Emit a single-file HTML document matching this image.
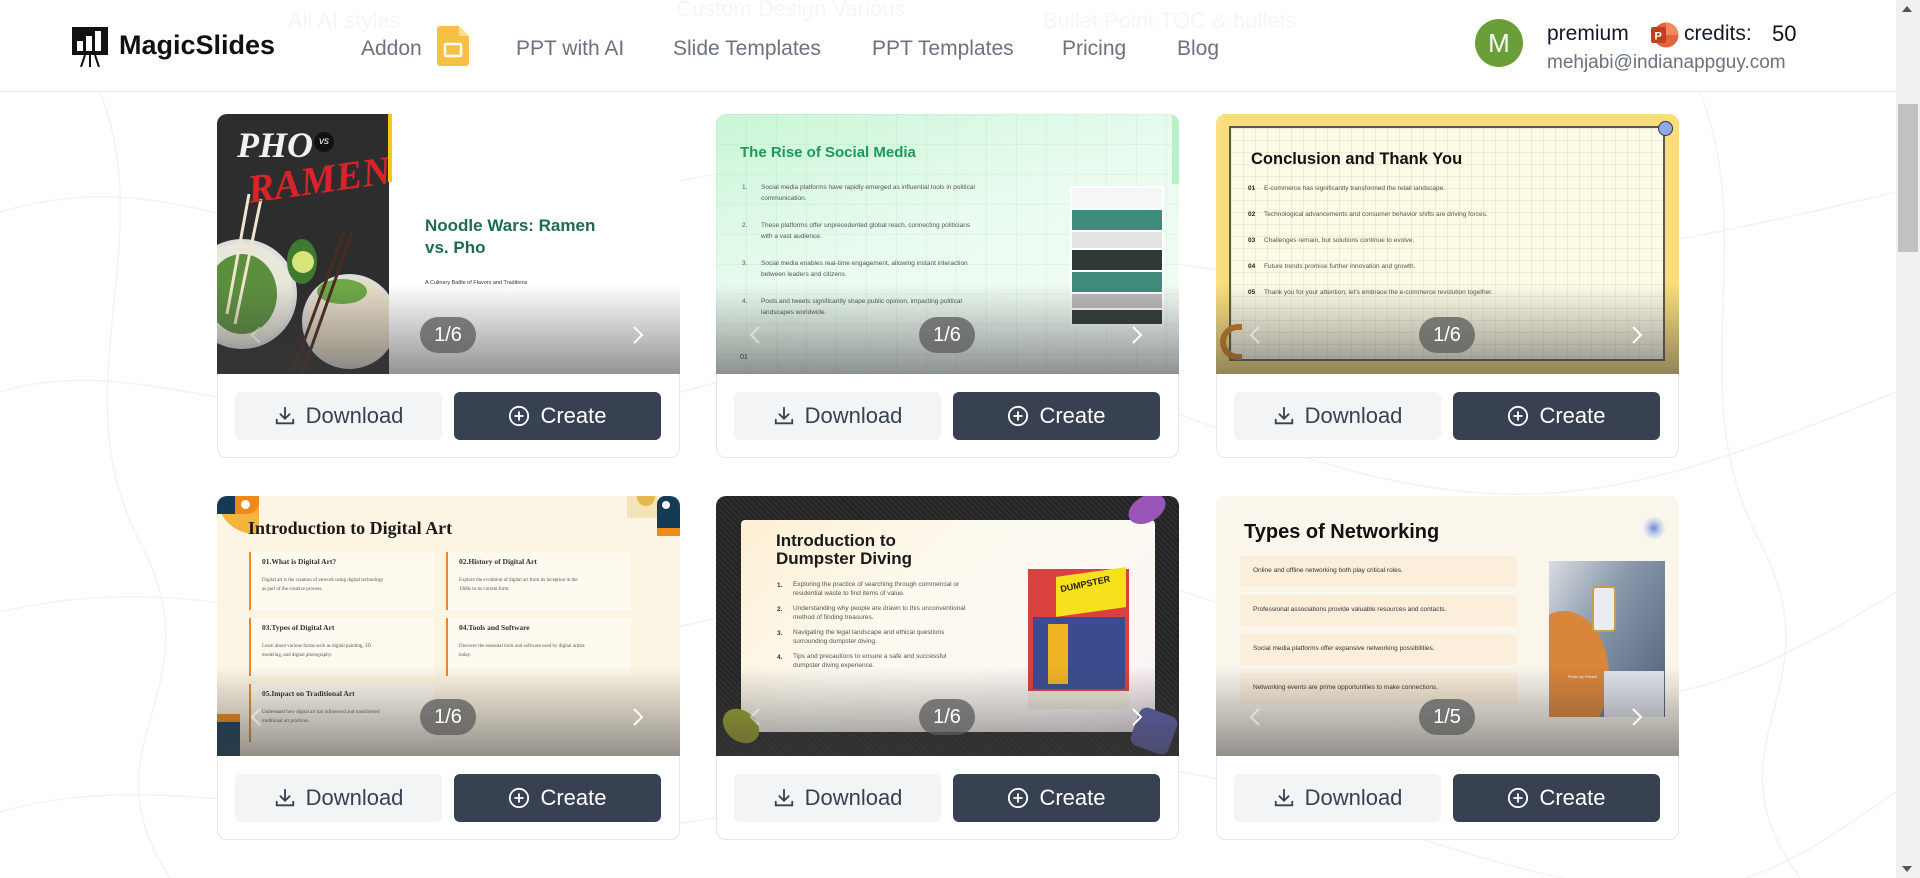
<!DOCTYPE html>
<html><head><meta charset="utf-8">
<style>
*{box-sizing:border-box;margin:0;padding:0}
html,body{width:1920px;height:878px;overflow:hidden;background:#fff;font-family:"Liberation Sans",sans-serif}
.abs{position:absolute}
.hdr{position:absolute;left:0;top:0;width:1896px;height:92px;background:#fff;border-bottom:1px solid #e5e7eb}
.nav{position:absolute;top:37px;font-size:21px;color:#6b7280;white-space:nowrap}
.ghost{position:absolute;color:#f6f6f7;font-size:22px;white-space:nowrap}
.card{position:absolute;width:463px;height:344px;border:1px solid #e5e7eb;border-radius:10px;background:#fff}
.img{position:absolute;left:-1px;top:-1px;width:463px;height:260px;overflow:hidden;border-radius:10px 10px 0 0}
.ov{position:absolute;left:0;top:170px;width:463px;height:90px;background:linear-gradient(to bottom,rgba(60,60,60,0),rgba(60,60,60,.55))}
.pill{position:absolute;left:203px;top:203px;width:56px;height:36px;border-radius:18px;background:rgba(90,90,90,.75);color:#fff;font-size:20px;text-align:center;line-height:36px}
.ar{position:absolute;top:211px}
.btn{position:absolute;top:277px;width:207px;height:48px;border-radius:6px;font-size:22px;display:flex;align-items:center;justify-content:center;gap:10px}
.dl{left:17px;background:#f3f4f6;color:#374151}
.cr{left:236px;background:#374151;color:#fff}
.t{position:absolute;white-space:nowrap}
.sm{font-size:6.5px;color:#555;line-height:11px}
</style></head><body>

<svg class="abs" style="left:0;top:92px" width="1896" height="786">
<g fill="none" stroke="#f3f3f3" stroke-width="1.5">
<path d="M0 120 C200 60 300 200 500 140 S800 40 1000 120 1400 220 1896 100"/>
<path d="M0 300 C150 250 350 380 600 320 S900 220 1200 330 1600 420 1896 300"/>
<path d="M0 520 C250 460 400 600 700 530 S1000 430 1300 540 1700 620 1896 500"/>
<path d="M0 720 C200 660 450 780 750 720 S1100 640 1400 740 1750 800 1896 700"/>
<path d="M1700 0 C1760 150 1680 300 1760 450 S1700 650 1800 786"/>
<path d="M100 0 C160 150 60 300 140 450 S80 650 170 786"/>
</g></svg>

<div class="hdr">
  <div class="ghost" style="left:288px;top:8px">All AI styles</div>
  <div class="ghost" style="left:676px;top:-4px">Custom Design Various</div>
  <div class="ghost" style="left:1043px;top:8px">Bullet Point TOC &amp; bullets</div>
  <svg class="abs" style="left:72px;top:27px" width="36" height="40" viewBox="0 0 36 40">
    <rect x="0" y="0" width="36" height="28" fill="#111"/>
    <rect x="5" y="14" width="6" height="10" fill="#fff"/>
    <rect x="14" y="9" width="6" height="15" fill="#fff"/>
    <rect x="23" y="4" width="6" height="20" fill="#fff"/>
    <path d="M18 28 L18 40 M13 28 L9 40 M23 28 L27 40" stroke="#111" stroke-width="2"/>
  </svg>
  <div class="t" style="left:119px;top:30px;font-size:27px;font-weight:bold;color:#111">MagicSlides</div>
  <div class="nav" style="left:361px">Addon</div>
  <svg class="abs" style="left:437px;top:26px" width="32" height="40" viewBox="0 0 32 40">
    <path d="M3 0 H22 L32 10 V37 a3 3 0 0 1 -3 3 H3 a3 3 0 0 1 -3 -3 V3 a3 3 0 0 1 3 -3z" fill="#f6c143"/>
    <path d="M22 0 V10 H32z" fill="#f9dc8e"/>
    <rect x="8" y="18" width="16" height="12" rx="1" fill="none" stroke="#fff" stroke-width="2.5"/>
  </svg>
  <div class="nav" style="left:516px">PPT with AI</div>
  <div class="nav" style="left:673px">Slide Templates</div>
  <div class="nav" style="left:872px">PPT Templates</div>
  <div class="nav" style="left:1062px">Pricing</div>
  <div class="nav" style="left:1177px">Blog</div>
  <div class="abs" style="left:1475px;top:19px;width:48px;height:48px;border-radius:50%;background:#6a9e39;color:#fff;font-size:26px;text-align:center;line-height:48px">M</div>
  <div class="t" style="left:1547px;top:22px;font-size:21px;color:#111827">premium</div>
  <svg class="abs" style="left:1650px;top:22px" width="29" height="26" viewBox="0 0 29 26">
    <circle cx="16" cy="13" r="12.5" fill="#e3633d"/>
    <path d="M16 0.5 A12.5 12.5 0 0 1 28.5 13 H16z" fill="#f08a5d"/>
    <rect x="1" y="5" width="15" height="16" rx="2" fill="#c43e1c"/>
    <text x="4.5" y="17.5" font-size="11" font-weight="bold" fill="#fff" font-family="Liberation Sans">P</text>
  </svg>
  <div class="t" style="left:1684px;top:22px;font-size:21px;color:#111827">credits:</div>
  <div class="t" style="left:1772px;top:21px;font-size:22px;color:#111">50</div>
  <div class="t" style="left:1547px;top:52px;font-size:19px;color:#6b7280">mehjabi@indianappguy.com</div>
</div>

<div class="abs" style="left:1896px;top:0;width:24px;height:878px;background:#f1f1f1"></div>
<div class="abs" style="left:1898px;top:104px;width:20px;height:148px;background:#c1c1c1"></div>
<div class="abs" style="left:1902px;top:6px;width:0;height:0;border-left:5px solid transparent;border-right:5px solid transparent;border-bottom:6px solid #555"></div>
<div class="abs" style="left:1902px;top:866px;width:0;height:0;border-left:5px solid transparent;border-right:5px solid transparent;border-top:6px solid #555"></div>

<!-- CARD 1 -->
<div class="card" style="left:217px;top:114px">
 <div class="img" style="background:#fff">
  <div class="abs" style="left:0;top:0;width:172px;height:260px;background:#2d2d2e;overflow:hidden">
   <div class="abs" style="left:-30px;top:125px;width:110px;height:110px;border-radius:50%;background:#e9e6dc;border:4px solid #ddd"></div>
   <div class="abs" style="left:-10px;top:140px;width:70px;height:80px;border-radius:50%;background:#5b8f3e"></div>
   <div class="abs" style="left:85px;top:160px;width:95px;height:95px;border-radius:50%;background:#e8dcc8;border:4px solid #ddd"></div>
   <div class="abs" style="left:100px;top:165px;width:50px;height:25px;border-radius:50%;background:#6ea846"></div>
   <div class="abs" style="left:70px;top:125px;width:30px;height:45px;border-radius:50%;background:#3f7a2e"></div>
   <div class="abs" style="left:75px;top:137px;width:22px;height:22px;border-radius:50%;background:#d8e47a"></div>
   <svg class="abs" style="left:0;top:0" width="172" height="260"><path d="M32 80 L10 200 M44 85 L18 210" stroke="#eee6cf" stroke-width="3"/><path d="M135 118 L85 260 M128 115 L75 260" stroke="#4a2b20" stroke-width="3"/></svg>
   <div class="t" style="left:20px;top:10px;font-size:36px;font-style:italic;font-weight:bold;color:#f2f2f2;font-family:'Liberation Serif',serif">PHO</div>
   <div class="abs" style="left:97px;top:18px;width:20px;height:20px;border-radius:50%;background:#111;color:#fff;font-size:10px;text-align:center;line-height:20px;font-style:italic">vs</div>
   <div class="t" style="left:30px;top:42px;font-size:40px;font-style:italic;font-weight:bold;color:#d9232b;font-family:'Liberation Serif',serif;transform:rotate(-8deg)">RAMEN</div>
  </div>
  <div class="abs" style="left:171px;top:0;width:4px;height:68px;background:#f5c915"></div>
  <div class="t" style="left:208px;top:101px;font-size:17px;font-weight:bold;color:#1e6b4e;line-height:22px">Noodle Wars: Ramen<br>vs. Pho</div>
  <div class="t" style="left:208px;top:166px;font-size:5.5px;color:#333">A Culinary Battle of Flavors and Traditions</div>
  <div class="ov"></div>
  <div class="pill">1/6</div>
  <svg class="ar" style="left:33px" width="12" height="20"><path d="M10 2 L2 10 L10 18" fill="none" stroke="rgba(255,255,255,.35)" stroke-width="2"/></svg>
  <svg class="ar" style="left:415px" width="12" height="20"><path d="M2 2 L10 10 L2 18" fill="none" stroke="#fff" stroke-width="2"/></svg>
 </div>
 <div class="btn dl"><svg width="22" height="22" viewBox="0 0 24 24" fill="none" stroke="#374151" stroke-width="2" stroke-linecap="round"><path d="M12 3v12M7 10l5 5 5-5M3 16v4h18v-4"/></svg>Download</div>
 <div class="btn cr"><svg width="22" height="22" viewBox="0 0 24 24" fill="none" stroke="#fff" stroke-width="2"><circle cx="12" cy="12" r="10"/><path d="M12 7v10M7 12h10"/></svg>Create</div>
</div>

<!-- CARD 2 -->
<div class="card" style="left:716px;top:114px">
 <div class="img" style="background:linear-gradient(160deg,#c9f6d7 0%,#e9fbef 45%,#f6fdf8 100%)">
  <div class="abs" style="left:0;top:0;width:463px;height:260px;background-image:linear-gradient(rgba(150,200,170,.15) 1px,transparent 1px),linear-gradient(90deg,rgba(150,200,170,.15) 1px,transparent 1px);background-size:30px 30px"></div>
  <div class="abs" style="left:456px;top:0;width:7px;height:70px;background:#b8f0c8"></div>
  <div class="t" style="left:24px;top:30px;font-size:15px;font-weight:bold;color:#1b9a57">The Rise of Social Media</div>
  <div class="t sm" style="left:26px;top:68px">1.</div><div class="t sm" style="left:45px;top:68px">Social media platforms have rapidly emerged as influential tools in political<br>communication.</div>
  <div class="t sm" style="left:26px;top:106px">2.</div><div class="t sm" style="left:45px;top:106px">These platforms offer unprecedented global reach, connecting politicians<br>with a vast audience.</div>
  <div class="t sm" style="left:26px;top:144px">3.</div><div class="t sm" style="left:45px;top:144px">Social media enables real-time engagement, allowing instant interaction<br>between leaders and citizens.</div>
  <div class="t sm" style="left:26px;top:182px">4.</div><div class="t sm" style="left:45px;top:182px">Posts and tweets significantly shape public opinion, impacting political<br>landscapes worldwide.</div>
  <div class="abs" style="left:354px;top:72px;width:94px;height:140px;background:#fff">
   <div class="abs" style="left:2px;top:2px;width:90px;height:20px;background:#f4f7f6"></div>
   <div class="abs" style="left:2px;top:24px;width:90px;height:20px;background:#3f8c7c"></div>
   <div class="abs" style="left:2px;top:46px;width:90px;height:16px;background:#e3e3e3"></div>
   <div class="abs" style="left:2px;top:64px;width:90px;height:20px;background:#2d3a38"></div>
   <div class="abs" style="left:2px;top:86px;width:90px;height:20px;background:#3f8c7c"></div>
   <div class="abs" style="left:2px;top:108px;width:90px;height:14px;background:#bbb"></div>
   <div class="abs" style="left:2px;top:124px;width:90px;height:14px;background:#2d3a38"></div>
  </div>
  <div class="t" style="left:24px;top:240px;font-size:7px;color:#333">01</div>
  <div class="ov"></div>
  <div class="pill">1/6</div>
  <svg class="ar" style="left:33px" width="12" height="20"><path d="M10 2 L2 10 L10 18" fill="none" stroke="rgba(255,255,255,.5)" stroke-width="2"/></svg>
  <svg class="ar" style="left:415px" width="12" height="20"><path d="M2 2 L10 10 L2 18" fill="none" stroke="#fff" stroke-width="2"/></svg>
 </div>
 <div class="btn dl"><svg width="22" height="22" viewBox="0 0 24 24" fill="none" stroke="#374151" stroke-width="2" stroke-linecap="round"><path d="M12 3v12M7 10l5 5 5-5M3 16v4h18v-4"/></svg>Download</div>
 <div class="btn cr"><svg width="22" height="22" viewBox="0 0 24 24" fill="none" stroke="#fff" stroke-width="2"><circle cx="12" cy="12" r="10"/><path d="M12 7v10M7 12h10"/></svg>Create</div>
</div>

<!-- CARD 3 -->
<div class="card" style="left:1216px;top:114px">
 <div class="img" style="background:#fbe07f">
  <div class="abs" style="left:6px;top:0;width:457px;height:260px;background:#f9dd7c"></div>
  <div class="abs" style="left:13px;top:12px;width:436px;height:235px;background:#fdfbe6;border:2px solid #5b5a48;background-image:linear-gradient(rgba(180,180,150,.2) 1px,transparent 1px),linear-gradient(90deg,rgba(180,180,150,.2) 1px,transparent 1px);background-size:12px 12px"></div>
  <div class="abs" style="left:442px;top:7px;width:15px;height:15px;border-radius:50%;background:#8fa9e6;border:1.5px solid #334"></div>
  <div class="t" style="left:35px;top:36px;font-size:16.5px;font-weight:bold;color:#111">Conclusion and Thank You</div>
  <div class="t sm" style="left:32px;top:69px;color:#222;font-weight:bold">01</div><div class="t sm" style="left:48px;top:69px">E-commerce has significantly transformed the retail landscape.</div>
  <div class="t sm" style="left:32px;top:95px;color:#222;font-weight:bold">02</div><div class="t sm" style="left:48px;top:95px">Technological advancements and consumer behavior shifts are driving forces.</div>
  <div class="t sm" style="left:32px;top:121px;color:#222;font-weight:bold">03</div><div class="t sm" style="left:48px;top:121px">Challenges remain, but solutions continue to evolve.</div>
  <div class="t sm" style="left:32px;top:147px;color:#222;font-weight:bold">04</div><div class="t sm" style="left:48px;top:147px">Future trends promise further innovation and growth.</div>
  <div class="t sm" style="left:32px;top:173px;color:#222;font-weight:bold">05</div><div class="t sm" style="left:48px;top:173px">Thank you for your attention; let's embrace the e-commerce revolution together.</div>
  <div class="abs" style="left:4px;top:210px;width:22px;height:36px;border:6px solid #c97a22;border-right:none;border-radius:18px 0 0 18px"></div>
  <div class="ov"></div>
  <div class="pill">1/6</div>
  <svg class="ar" style="left:33px" width="12" height="20"><path d="M10 2 L2 10 L10 18" fill="none" stroke="rgba(255,255,255,.5)" stroke-width="2"/></svg>
  <svg class="ar" style="left:415px" width="12" height="20"><path d="M2 2 L10 10 L2 18" fill="none" stroke="#fff" stroke-width="2"/></svg>
 </div>
 <div class="btn dl"><svg width="22" height="22" viewBox="0 0 24 24" fill="none" stroke="#374151" stroke-width="2" stroke-linecap="round"><path d="M12 3v12M7 10l5 5 5-5M3 16v4h18v-4"/></svg>Download</div>
 <div class="btn cr"><svg width="22" height="22" viewBox="0 0 24 24" fill="none" stroke="#fff" stroke-width="2"><circle cx="12" cy="12" r="10"/><path d="M12 7v10M7 12h10"/></svg>Create</div>
</div>

<!-- CARD 4 -->
<div class="card" style="left:217px;top:496px">
 <div class="img" style="background:#fdf5e3">
  <div class="abs" style="left:0;top:0;width:42px;height:38px;background:#f4b43d;border-radius:0 0 0 38px"></div>
  <div class="abs" style="left:0;top:0;width:22px;height:18px;background:#153a55"></div>
  <div class="abs" style="left:18px;top:0;width:24px;height:18px;background:#ee8a1a;border-radius:0 0 12px 0"></div>
  <div class="abs" style="left:24px;top:4px;width:9px;height:9px;border-radius:50%;background:#fff"></div>
  <div class="abs" style="left:410px;top:0;width:30px;height:22px;background:#f2e3b9"></div>
  <div class="abs" style="left:420px;top:0;width:18px;height:10px;border-radius:0 0 9px 9px;background:#e6b850"></div>
  <div class="abs" style="left:440px;top:0;width:23px;height:40px;background:#153a55;border-bottom:8px solid #ee8a1a;border-radius:8px 0 0 0"></div>
  <div class="abs" style="left:445px;top:5px;width:8px;height:8px;border-radius:50%;background:#fff"></div>
  <div class="abs" style="left:0;top:218px;width:23px;height:42px;background:#153a55;border-top:8px solid #ee8a1a"></div>
  <div class="t" style="left:31px;top:22px;font-size:18px;font-weight:bold;color:#1a1a1a;font-family:'Liberation Serif',serif">Introduction to Digital Art</div>
  <div class="abs" style="left:32px;top:56px;width:185px;height:58px;background:#fffaef;border-left:2px solid #e9882a"></div>
  <div class="abs" style="left:229px;top:56px;width:185px;height:58px;background:#fffaef;border-left:2px solid #e9882a"></div>
  <div class="abs" style="left:32px;top:122px;width:185px;height:58px;background:#fffaef;border-left:2px solid #e9882a"></div>
  <div class="abs" style="left:229px;top:122px;width:185px;height:58px;background:#fffaef;border-left:2px solid #e9882a"></div>
  <div class="abs" style="left:32px;top:188px;width:185px;height:58px;background:#fffaef;border-left:2px solid #e9882a"></div>
  <div class="t" style="left:45px;top:61px;font-size:7.5px;font-weight:bold;font-family:'Liberation Serif',serif;color:#333">01.What is Digital Art?</div>
  <div class="t" style="left:242px;top:61px;font-size:7.5px;font-weight:bold;font-family:'Liberation Serif',serif;color:#333">02.History of Digital Art</div>
  <div class="t" style="left:45px;top:127px;font-size:7.5px;font-weight:bold;font-family:'Liberation Serif',serif;color:#333">03.Types of Digital Art</div>
  <div class="t" style="left:242px;top:127px;font-size:7.5px;font-weight:bold;font-family:'Liberation Serif',serif;color:#333">04.Tools and Software</div>
  <div class="t" style="left:45px;top:193px;font-size:7.5px;font-weight:bold;font-family:'Liberation Serif',serif;color:#333">05.Impact on Traditional Art</div>
  <div class="t" style="left:45px;top:80px;font-size:5px;line-height:9px;color:#555;font-family:'Liberation Serif',serif">Digital art is the creation of artwork using digital technology<br>as part of the creative process.</div>
  <div class="t" style="left:242px;top:80px;font-size:5px;line-height:9px;color:#555;font-family:'Liberation Serif',serif">Explore the evolution of digital art from its inception in the<br>1960s to its current form.</div>
  <div class="t" style="left:45px;top:146px;font-size:5px;line-height:9px;color:#555;font-family:'Liberation Serif',serif">Learn about various forms such as digital painting, 3D<br>modeling, and digital photography.</div>
  <div class="t" style="left:242px;top:146px;font-size:5px;line-height:9px;color:#555;font-family:'Liberation Serif',serif">Discover the essential tools and software used by digital artists<br>today.</div>
  <div class="t" style="left:45px;top:212px;font-size:5px;line-height:9px;color:#555;font-family:'Liberation Serif',serif">Understand how digital art has influenced and transformed<br>traditional art practices.</div>
  <div class="ov"></div>
  <div class="pill">1/6</div>
  <svg class="ar" style="left:33px" width="12" height="20"><path d="M10 2 L2 10 L10 18" fill="none" stroke="rgba(255,255,255,.5)" stroke-width="2"/></svg>
  <svg class="ar" style="left:415px" width="12" height="20"><path d="M2 2 L10 10 L2 18" fill="none" stroke="#fff" stroke-width="2"/></svg>
 </div>
 <div class="btn dl"><svg width="22" height="22" viewBox="0 0 24 24" fill="none" stroke="#374151" stroke-width="2" stroke-linecap="round"><path d="M12 3v12M7 10l5 5 5-5M3 16v4h18v-4"/></svg>Download</div>
 <div class="btn cr"><svg width="22" height="22" viewBox="0 0 24 24" fill="none" stroke="#fff" stroke-width="2"><circle cx="12" cy="12" r="10"/><path d="M12 7v10M7 12h10"/></svg>Create</div>
</div>

<!-- CARD 5 -->
<div class="card" style="left:716px;top:496px">
 <div class="img" style="background:#2a2a2a;background-image:repeating-linear-gradient(45deg,#2e2e2e 0 2px,#232323 2px 4px)">
  <div class="abs" style="left:25px;top:24px;width:414px;height:212px;border-radius:4px;background:linear-gradient(135deg,#fdefd3 0%,#fdfaf0 40%,#fbf6f4 85%,#f5e6f0 100%)"></div>
  <div class="t" style="left:60px;top:36px;font-size:17px;font-weight:bold;color:#1a1a1a;line-height:18px">Introduction to<br>Dumpster Diving</div>
  <div class="t sm" style="left:61px;top:84px;font-weight:bold;color:#333">1.</div><div class="t sm" style="left:77px;top:84px;line-height:9px">Exploring the practice of searching through commercial or<br>residential waste to find items of value.</div>
  <div class="t sm" style="left:61px;top:108px;font-weight:bold;color:#333">2.</div><div class="t sm" style="left:77px;top:108px;line-height:9px">Understanding why people are drawn to this unconventional<br>method of finding treasures.</div>
  <div class="t sm" style="left:61px;top:132px;font-weight:bold;color:#333">3.</div><div class="t sm" style="left:77px;top:132px;line-height:9px">Navigating the legal landscape and ethical questions<br>surrounding dumpster diving.</div>
  <div class="t sm" style="left:61px;top:156px;font-weight:bold;color:#333">4.</div><div class="t sm" style="left:77px;top:156px;line-height:9px">Tips and precautions to ensure a safe and successful<br>dumpster diving experience.</div>
  <div class="abs" style="left:312px;top:73px;width:101px;height:140px;background:#d8413d">
   <div class="abs" style="left:28px;top:3px;width:70px;height:40px;background:#f5e21c;transform:skewY(-8deg)"></div>
   <div class="abs" style="left:5px;top:48px;width:92px;height:72px;background:#3b4b8f"></div>
   <div class="abs" style="left:20px;top:55px;width:20px;height:60px;background:#f0b325"></div>
   <div class="abs" style="left:0;top:122px;width:101px;height:18px;background:#f2ece0"></div>
   <div class="t" style="left:32px;top:10px;font-size:9px;font-weight:bold;color:#2a1a1a;transform:rotate(-12deg)">DUMPSTER</div>
  </div>
  <div class="abs" style="left:411px;top:0;width:40px;height:26px;border-radius:50%;background:#9a55b8;transform:rotate(-30deg)"></div>
  <div class="abs" style="left:418px;top:215px;width:40px;height:40px;border-radius:8px;background:#5a5fa8;transform:rotate(20deg)"></div>
  <div class="abs" style="left:5px;top:215px;width:40px;height:30px;border-radius:50%;background:#9aa22a;transform:rotate(40deg)"></div>
  <div class="ov"></div>
  <div class="pill">1/6</div>
  <svg class="ar" style="left:33px" width="12" height="20"><path d="M10 2 L2 10 L10 18" fill="none" stroke="rgba(255,255,255,.5)" stroke-width="2"/></svg>
  <svg class="ar" style="left:415px" width="12" height="20"><path d="M2 2 L10 10 L2 18" fill="none" stroke="#fff" stroke-width="2"/></svg>
 </div>
 <div class="btn dl"><svg width="22" height="22" viewBox="0 0 24 24" fill="none" stroke="#374151" stroke-width="2" stroke-linecap="round"><path d="M12 3v12M7 10l5 5 5-5M3 16v4h18v-4"/></svg>Download</div>
 <div class="btn cr"><svg width="22" height="22" viewBox="0 0 24 24" fill="none" stroke="#fff" stroke-width="2"><circle cx="12" cy="12" r="10"/><path d="M12 7v10M7 12h10"/></svg>Create</div>
</div>

<!-- CARD 6 -->
<div class="card" style="left:1216px;top:496px">
 <div class="img" style="background:#fbf6ec">
  <div class="t" style="left:28px;top:25px;font-size:20px;font-weight:bold;color:#111">Types of Networking</div>
  <div class="abs" style="left:426px;top:20px;width:24px;height:24px;border-radius:50%;background:radial-gradient(#6f8fcc,#c8d4ee 40%,transparent 70%)"></div>
  <div class="abs" style="left:24px;top:60px;width:277px;height:31px;background:#fbeedb"></div>
  <div class="abs" style="left:24px;top:99px;width:277px;height:31px;background:#fbeedb"></div>
  <div class="abs" style="left:24px;top:138px;width:277px;height:31px;background:#fbeedb"></div>
  <div class="abs" style="left:24px;top:177px;width:277px;height:31px;background:#fbeedb"></div>
  <div class="t" style="left:37px;top:71px;font-size:6.5px;color:#333">Online and offline networking both play critical roles.</div>
  <div class="t" style="left:37px;top:110px;font-size:6.5px;color:#333">Professional associations provide valuable resources and contacts.</div>
  <div class="t" style="left:37px;top:149px;font-size:6.5px;color:#333">Social media platforms offer expansive networking possibilities.</div>
  <div class="t" style="left:37px;top:188px;font-size:6.5px;color:#333">Networking events are prime opportunities to make connections.</div>
  <div class="abs" style="left:333px;top:65px;width:116px;height:156px;background:linear-gradient(120deg,#d9dde2 0%,#8a99ab 40%,#4d5f78 100%);overflow:hidden">
   <div class="abs" style="left:-30px;top:50px;width:90px;height:130px;border-radius:50%;background:#d9853a"></div>
   <div class="abs" style="left:43px;top:25px;width:24px;height:46px;border-radius:4px;background:#e9edf2;border:2px solid #c99c4b"></div>
   <div class="abs" style="left:55px;top:110px;width:60px;height:46px;background:#dfe3ea"></div>
  </div>
  <div class="t" style="left:352px;top:178px;font-size:4px;color:#fff">Photo by Pexels</div>
  <div class="ov"></div>
  <div class="pill">1/5</div>
  <svg class="ar" style="left:33px" width="12" height="20"><path d="M10 2 L2 10 L10 18" fill="none" stroke="rgba(255,255,255,.5)" stroke-width="2"/></svg>
  <svg class="ar" style="left:415px" width="12" height="20"><path d="M2 2 L10 10 L2 18" fill="none" stroke="#fff" stroke-width="2"/></svg>
 </div>
 <div class="btn dl"><svg width="22" height="22" viewBox="0 0 24 24" fill="none" stroke="#374151" stroke-width="2" stroke-linecap="round"><path d="M12 3v12M7 10l5 5 5-5M3 16v4h18v-4"/></svg>Download</div>
 <div class="btn cr"><svg width="22" height="22" viewBox="0 0 24 24" fill="none" stroke="#fff" stroke-width="2"><circle cx="12" cy="12" r="10"/><path d="M12 7v10M7 12h10"/></svg>Create</div>
</div>
</body></html>
